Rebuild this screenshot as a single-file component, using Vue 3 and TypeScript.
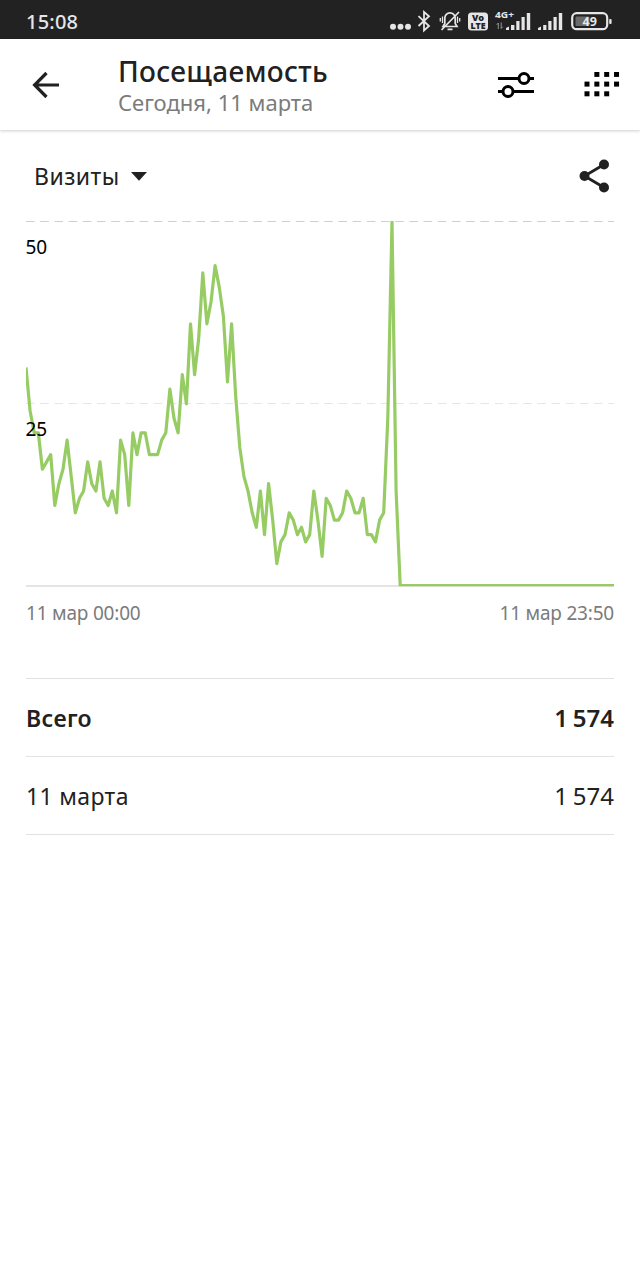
<script setup lang="ts">
interface Row {
  label: string
  value: string
  total?: boolean
}

// Visits per ten minutes, from 00:00 on
const visits: number[] = [
  30, 24, 21, 21, 16, 17, 18, 11, 14, 16, 20, 15, 10, 12, 13, 17, 14, 13, 17, 12,
  11, 13, 10, 20, 18, 11, 21, 18, 21, 21, 18, 18, 18, 20, 21, 27, 23, 21, 29, 25,
  36, 29, 34, 43, 36, 39, 44, 41, 37, 28, 36, 26, 19, 15, 13, 10, 8, 13, 7, 14,
  9, 3, 6, 7, 10, 9, 7, 8, 6, 7, 13, 9, 4, 12, 11, 9, 9, 10, 13, 12,
  10, 10, 12, 7, 7, 6, 9, 10, 23, 50, 13, 0,
]
const slots = 144
const width = 588
const baseline = 364.5
const unit = 7.27

const points = Array.from({ length: slots }, (_, i) => {
  const x = (i * width) / (slots - 1)
  const y = baseline - (visits[i] ?? 0) * unit
  return `${x.toFixed(1)},${y.toFixed(1)}`
}).join(' ')

const rows: Row[] = [
  { label: 'Всего', value: '1 574', total: true },
  { label: '11 марта', value: '1 574' },
]

const dots: [number, number][] = [
  [10, 0], [20, 0], [30, 0],
  [0, 10], [10, 10], [20, 10], [30, 10],
  [0, 20], [10, 20], [20, 20],
]
</script>

<template>
  <div class="screen">
    <div class="status">
      <span class="clock">15:08</span>
      <svg class="status-icons" width="230" height="39" viewBox="0 0 230 39">
        <g fill="#e6e6e6">
          <circle cx="3" cy="26.800" r="3" />
          <circle cx="10.500" cy="26.800" r="3" />
          <circle cx="18" cy="26.800" r="3" />
        </g>
        <path d="M28.500 16.200 39 26l-5 4.500V12l5 4.200L28.500 26" fill="none" stroke="#e6e6e6" stroke-width="1.800" />
        <g fill="none" stroke="#e6e6e6" stroke-width="1.700">
          <path d="M53 26.500h14l-1.800-3v-5.500a5.200 5.200 0 0 0-10.400 0v5.500zM57.500 29.300h5M69 12 51.500 30" />
          <path d="M52.500 16.500v6.500M50.300 18v3.500M67.500 16.500v6.500M69.700 18v3.500" stroke-width="1.300" />
        </g>
        <rect x="78" y="12.500" width="20" height="18" rx="3.500" fill="#e6e6e6" />
        <text x="88" y="20.600" class="badge" textLength="12" lengthAdjust="spacingAndGlyphs">Vo</text>
        <text x="88" y="28.800" class="badge" textLength="15" lengthAdjust="spacingAndGlyphs">LTE</text>
        <text x="105" y="18" class="net" textLength="19" lengthAdjust="spacingAndGlyphs">4G+</text>
        <path d="M108.300 29v-6l-1.500 1.800M111.200 22.500v6l1.500-1.800" fill="none" stroke="#a0a0a0" stroke-width=".9" />
        <g fill="#e6e6e6">
          <path d="M116 30v-2l3-1.500V30zM121 30v-5h3.400v5zM126.300 30v-9h3.200v9zM131.500 30V17h3.200v13zM136.800 30V13h3.400v17z" />
          <path d="M148 30v-2l3-1.500V30zM153.200 30v-5h3.200v5zM158.300 30v-9h3.200v9zM163.500 30V17h3.200v13zM168.800 30V13h3.400v17z" />
        </g>
        <rect x="182.200" y="13.200" width="35" height="16" rx="4.500" fill="none" stroke="#e6e6e6" stroke-width="2.200" />
        <rect x="185.500" y="16.500" width="14" height="9.500" rx="1" fill="#6a6a6a" />
        <rect x="219.200" y="19" width="2.400" height="5" rx="1" fill="#e6e6e6" />
        <text x="199.700" y="25.600" class="charge">49</text>
      </svg>
    </div>

    <header class="bar">
      <svg class="back" width="28" height="28" viewBox="0 0 28 28" fill="none" stroke="#212121" stroke-width="3.200">
        <path d="M27 14H3M14.500 2 2.600 14l11.900 12" />
      </svg>
      <div class="heading">
        <h1>Посещаемость</h1>
        <p>Сегодня, 11 марта</p>
      </div>
      <svg class="sliders" width="36" height="28" viewBox="0 0 36 28" stroke="#000" stroke-width="3">
        <path d="M0 7.500h36M0 20.500h36" />
        <circle cx="26" cy="7.500" r="5" fill="#fff" />
        <circle cx="10" cy="20.500" r="5" fill="#fff" />
      </svg>
      <svg class="dots" width="36" height="26" viewBox="0 0 36 26">
        <rect v-for="([x, y], i) in dots" :key="i" :x="x * 0.985 + 0.5" :y="y * 0.970 - 0.1" width="5" height="5" />
      </svg>
    </header>

    <main>
      <div class="tools">
        <span class="metric">Визиты</span>
        <svg class="caret" width="16" height="9" viewBox="0 0 16 9"><path d="M0 0h16L8 8.800z" fill="#212121" /></svg>
        <svg class="share" width="32" height="34" viewBox="0 0 32 34" fill="#212121">
          <path d="M25 5.500 5.500 17 25 28.500" fill="none" stroke="#212121" stroke-width="2.800" />
          <circle cx="25" cy="5.500" r="5" />
          <circle cx="5.500" cy="17" r="5" />
          <circle cx="25" cy="28.500" r="5" />
        </svg>
      </div>

      <div class="chart">
        <svg width="588" height="366" viewBox="0 0 588 366">
          <path d="M0 .500H588" stroke="#cfcfcf" stroke-dasharray="8.600 5.600" />
          <path d="M0 182.500H588" stroke="#e6e6e6" stroke-dasharray="8.600 5.600" />
          <path d="M0 365H588" stroke="#e4e4e4" stroke-width="2" />
          <svg width="588" height="365.300">
            <polyline :points="points" fill="none" stroke="#97cc64" stroke-width="3.200" stroke-linejoin="round" />
          </svg>
        </svg>
        <span class="tick top">50</span>
        <span class="tick mid">25</span>
      </div>
      <div class="range">
        <span>11 мар 00:00</span>
        <span>11 мар 23:50</span>
      </div>

      <div class="table">
        <div v-for="row in rows" :key="row.label" class="row" :class="{ total: row.total }">
          <span class="label">{{ row.label }}</span>
          <span class="value">{{ row.value }}</span>
        </div>
      </div>
    </main>
  </div>
</template>

<style>
body {
  margin: 0;
  background: #fff;
}
</style>

<style scoped>
.screen {
  width: 640px;
  height: 1280px;
  overflow: hidden;
  background: #fff;
  color: #212121;
  font-family: "Noto Sans", "Open Sans", sans-serif;
}
.status {
  height: 39px;
  display: flex;
  justify-content: space-between;
  background: #222;
  color: #e6e6e6;
}
.clock {
  margin-left: 26px;
  font-size: 20px;
  line-height: 43px;
  font-weight: 500;
  letter-spacing: 0.2px;
}
.status-icons {
  margin-right: 20px;
}
.badge {
  font: 900 9px "Noto Sans", sans-serif;
  fill: #222;
  text-anchor: middle;
}
.net {
  font: 700 9px "Noto Sans", sans-serif;
  fill: #e6e6e6;
}
.charge {
  font: 700 12.5px "Noto Sans", sans-serif;
  fill: #e6e6e6;
  text-anchor: middle;
}
.bar {
  height: 91px;
  display: flex;
  align-items: center;
  box-shadow: 0 1px 3px rgba(0, 0, 0, 0.2);
}
.back {
  margin-left: 32px;
}
.heading {
  margin-left: 58px;
  padding-top: 2px;
  flex: 1;
}
h1,
p {
  margin: 0;
  white-space: nowrap;
}
h1 {
  font-size: 28px;
  line-height: 34px;
  font-weight: 500;
  letter-spacing: 0.3px;
}
p {
  font-size: 22px;
  line-height: 29px;
  color: #7b7b7b;
}
.sliders {
  margin-right: 50px;
}
.dots {
  margin-right: 20px;
}
main {
  padding: 0 26px;
}
.tools {
  height: 91px;
  display: flex;
  align-items: center;
  padding: 0 3px 0 8px;
}
.metric {
  font-size: 23px;
  letter-spacing: 0.45px;
}
.caret {
  margin: 2px 0 0 11px;
}
.share {
  margin-left: auto;
}
.chart {
  position: relative;
  height: 366px;
}
.chart svg {
  display: block;
}
.tick {
  position: absolute;
  left: -0.5px;
  font-size: 19px;
  line-height: 24px;
  color: #000;
}
.top {
  top: 14px;
}
.mid {
  top: 196px;
}
.range {
  height: 91px;
  display: flex;
  justify-content: space-between;
  font-size: 19px;
  line-height: 52px;
  letter-spacing: -0.2px;
  color: #7b7b7b;
}
.table {
  border-top: 1px solid #e2e2e2;
}
.row {
  height: 77px;
  display: flex;
  justify-content: space-between;
  align-items: center;
  border-bottom: 1px solid #e2e2e2;
  font-size: 23px;
}
.label {
  letter-spacing: 0.35px;
}
.value {
  font-size: 24px;
  word-spacing: -1.5px;
}
.total {
  font-weight: 600;
}
</style>
